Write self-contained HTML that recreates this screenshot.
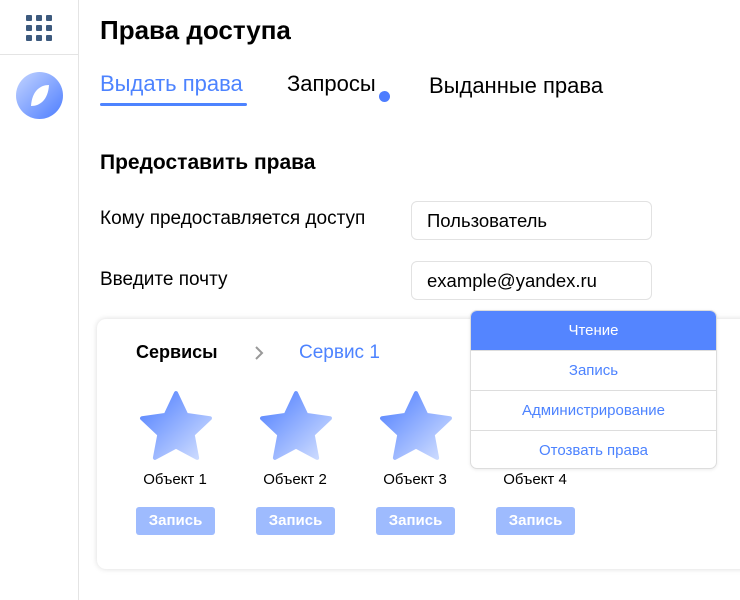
<!DOCTYPE html>
<html><head><meta charset="utf-8"><style>
*{margin:0;padding:0;box-sizing:border-box}
body{width:740px;height:600px;background:#fff;font-family:"Liberation Sans","Noto Sans CJK SC",sans-serif;position:relative;overflow:hidden;color:#000}
.a{position:absolute}
.inp{position:absolute;left:411px;width:241px;height:39px;border:1px solid #e2e2e2;border-radius:6px;font-size:18.5px;padding:8px 0 0 15px}
.lbl{position:absolute;left:100px;font-size:19px}
.obj{position:absolute;width:100px;text-align:center;font-size:15px}
.btn{position:absolute;width:79px;height:28px;background:#9ebbfe;border-radius:3px;color:#fff;font-size:15px;font-weight:bold;text-align:center;line-height:28px}
.dd div{height:40px;border-top:1px solid #ddd;color:#4d83ff;font-size:15px;text-align:center;line-height:39px}
</style></head><body>
<div class="a" style="left:78px;top:0;width:1px;height:600px;background:#e4e4e4"></div>
<div class="a" style="left:0;top:54px;width:78px;height:1px;background:#e4e4e4"></div>
<svg class="a" style="left:26px;top:15px" width="26" height="26">
<g fill="#3d5a7e"><rect x="0" y="0" width="6" height="6" rx="1"/><rect x="10" y="0" width="6" height="6" rx="1"/><rect x="20" y="0" width="6" height="6" rx="1"/><rect x="0" y="10" width="6" height="6" rx="1"/><rect x="10" y="10" width="6" height="6" rx="1"/><rect x="20" y="10" width="6" height="6" rx="1"/><rect x="0" y="20" width="6" height="6" rx="1"/><rect x="10" y="20" width="6" height="6" rx="1"/><rect x="20" y="20" width="6" height="6" rx="1"/></g></svg>
<svg class="a" style="left:16px;top:72px" width="47" height="47" viewBox="0 0 47 47">
<defs><linearGradient id="lg" x1="0" y1="0" x2="1" y2="1"><stop offset="0" stop-color="#c3d4ff"/><stop offset="1" stop-color="#4d7dff"/></linearGradient></defs>
<circle cx="23.5" cy="23.5" r="23.5" fill="url(#lg)"/>
<path d="M33 13 C24 13 16 19 15 34 C24 34 32 28 33 13Z" fill="#fff"/></svg>
<div class="a" style="left:100px;top:15px;font-size:26px;font-weight:bold">Права доступа</div>
<div class="a" style="left:100px;top:71px;font-size:22px;color:#4d83ff">Выдать права</div>
<div class="a" style="left:100px;top:103px;width:147px;height:3px;background:#4d83ff;border-radius:2px"></div>
<div class="a" style="left:287px;top:71px;font-size:22px">Запросы</div>
<div class="a" style="left:379px;top:91px;width:11px;height:11px;background:#4d7dff;border-radius:50%"></div>
<div class="a" style="left:429px;top:73px;font-size:22px">Выданные права</div>
<div class="a" style="left:100px;top:151px;font-size:21px;font-weight:bold">Предоставить права</div>
<div class="lbl" style="top:208px">Кому предоставляется доступ</div>
<div class="lbl" style="top:269px">Введите почту</div>
<div class="inp" style="top:201px">Пользователь</div>
<div class="inp" style="top:261px">example@yandex.ru</div>
<div class="a" style="left:97px;top:319px;width:700px;height:250px;border-radius:9px;box-shadow:0 0 6px rgba(0,0,0,.15);background:#fff"></div>
<div class="a" style="left:136px;top:342px;font-size:18px;font-weight:bold">Сервисы</div>
<svg class="a" style="left:253px;top:345px" width="12" height="16"><path d="M3 2 L9 8 L3 14" fill="none" stroke="#999" stroke-width="2"/></svg>
<div class="a" style="left:299px;top:342px;font-size:19px;color:#4d83ff">Сервис 1</div>
<svg width="0" height="0" style="position:absolute"><defs><linearGradient id="sg" x1="0" y1="0" x2="1" y2="1"><stop offset="0" stop-color="#4d7dff"/><stop offset="1" stop-color="#d6e2ff"/></linearGradient></defs></svg>
<svg class="a" style="left:138px;top:390px" width="76" height="72" viewBox="1 0 74 70"><path d="M38 3 L48 24.2 L71 27.5 L54.2 43.3 L58.5 66 L38 55 L17.5 66 L21.8 43.3 L5 27.5 L28 24.2Z" fill="url(#sg)" stroke="url(#sg)" stroke-width="4" stroke-linejoin="round"/></svg>
<svg class="a" style="left:258px;top:390px" width="76" height="72" viewBox="1 0 74 70"><path d="M38 3 L48 24.2 L71 27.5 L54.2 43.3 L58.5 66 L38 55 L17.5 66 L21.8 43.3 L5 27.5 L28 24.2Z" fill="url(#sg)" stroke="url(#sg)" stroke-width="4" stroke-linejoin="round"/></svg>
<svg class="a" style="left:378px;top:390px" width="76" height="72" viewBox="1 0 74 70"><path d="M38 3 L48 24.2 L71 27.5 L54.2 43.3 L58.5 66 L38 55 L17.5 66 L21.8 43.3 L5 27.5 L28 24.2Z" fill="url(#sg)" stroke="url(#sg)" stroke-width="4" stroke-linejoin="round"/></svg>
<div class="obj" style="left:125px;top:471px">Объект 1</div>
<div class="obj" style="left:245px;top:471px">Объект 2</div>
<div class="obj" style="left:365px;top:471px">Объект 3</div>
<div class="obj" style="left:485px;top:471px">Объект 4</div>
<div class="btn" style="left:136px;top:507px">Запись</div>
<div class="btn" style="left:256px;top:507px">Запись</div>
<div class="btn" style="left:376px;top:507px">Запись</div>
<div class="btn" style="left:496px;top:507px">Запись</div>
<div class="a dd" style="left:470px;top:310px;width:247px;height:159px;border:1px solid #ddd;border-radius:7px;background:#fff;overflow:hidden;box-shadow:0 1px 3px rgba(0,0,0,.08)">
<div style="border-top:none;background:#5485ff;color:#fff;height:39px">Чтение</div>
<div>Запись</div><div>Администрирование</div><div>Отозвать права</div></div>
</body></html>
